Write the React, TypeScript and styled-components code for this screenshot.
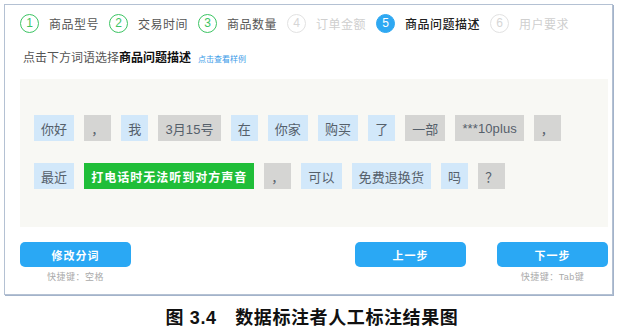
import React from 'react';
import styled, { createGlobalStyle } from 'styled-components';

const GlobalStyle = createGlobalStyle`
  body {
    margin: 0;
    background: #ffffff;
    font-family: "Liberation Sans", "Noto Sans CJK SC", sans-serif;
  }
`;

const Page = styled.div`
  width: 626px;
  height: 332px;
  padding: 4px 0 0 4px;
  box-sizing: border-box;
`;

const Frame = styled.div`
  width: 609px;
  height: 291px;
  box-sizing: border-box;
  border: 1px solid #b4c1d3;
  box-shadow: 1px 1px 0 #a3b3ca;
  padding: 7px 4px 0 15px;
  display: flex;
  flex-direction: column;
`;

const Steps = styled.div`
  display: flex;
  align-items: center;
  height: 22px;
`;

const Step = styled.div`
  display: flex;
  align-items: center;
  margin-right: 10px;
`;

type StepState = 'done' | 'active' | 'todo';

const Circle = styled.span<{ $state: StepState }>`
  width: 19px;
  height: 19px;
  box-sizing: border-box;
  border-radius: 50%;
  display: flex;
  align-items: center;
  justify-content: center;
  font-size: 12px;
  margin-right: 10px;
  border: 1.5px solid
    ${(p) => (p.$state === 'done' ? '#3cc463' : p.$state === 'active' ? '#2ea8f2' : '#e2e2e2')};
  background: ${(p) => (p.$state === 'active' ? '#2ea8f2' : 'transparent')};
  color: ${(p) => (p.$state === 'done' ? '#3cc463' : p.$state === 'active' ? '#fff' : '#d6d6d6')};
`;

const StepLabel = styled.span<{ $state: StepState }>`
  font-size: 12px;
  letter-spacing: 0.5px;
  color: ${(p) => (p.$state === 'done' ? '#555' : p.$state === 'active' ? '#222' : '#cfcfcf')};
  font-weight: ${(p) => (p.$state === 'active' ? 500 : 400)};
`;

const Hint = styled.div`
  margin-top: 14px;
  font-size: 12px;
  color: #555;
  display: flex;
  align-items: baseline;
  padding-left: 3px;
`;

const HintStrong = styled.b`
  color: #111;
  font-weight: 700;
`;

const SampleLink = styled.span`
  font-size: 8px;
  color: #3a9be8;
  margin-left: 7px;
`;

const Panel = styled.div`
  margin-top: 14px;
  background: #f8f8f4;
  height: 148px;
  box-sizing: border-box;
  padding: 36px 0 0 14px;
  display: flex;
  flex-direction: column;
  gap: 22px;
`;

const TokenRow = styled.div`
  display: flex;
  gap: 10px;
`;

type TokenKind = 'word' | 'punct' | 'key';

const Token = styled.span<{ $kind: TokenKind }>`
  height: 26px;
  min-width: 26px;
  box-sizing: border-box;
  padding: 0 7px;
  display: flex;
  align-items: center;
  justify-content: center;
  font-size: ${(p) => (p.$kind === 'key' ? '12px' : '13px')};
  letter-spacing: ${(p) => (p.$kind === 'key' ? '1px' : '0.1px')};
  font-weight: ${(p) => (p.$kind === 'key' ? 700 : 400)};
  background: ${(p) => (p.$kind === 'word' ? '#d2e8fa' : p.$kind === 'punct' ? '#d5d5d3' : '#1fbe38')};
  color: ${(p) => (p.$kind === 'key' ? '#fff' : '#55606b')};
`;

const Actions = styled.div`
  margin-top: 15px;
  display: flex;
  justify-content: space-between;
  align-items: flex-start;
`;

const NavGroup = styled.div`
  display: flex;
  gap: 31px;
`;

const ActionGroup = styled.div`
  display: flex;
  flex-direction: column;
  align-items: center;
`;

const Button = styled.button`
  width: 111px;
  height: 25px;
  border: none;
  border-radius: 5px;
  background: #2aa8f4;
  color: #fff;
  font-family: inherit;
  font-size: 11px;
  font-weight: 700;
  letter-spacing: 1px;
  padding: 0;
`;

const Shortcut = styled.span`
  margin-top: 3px;
  font-size: 9px;
  color: #aaa;
  letter-spacing: 0.5px;
`;

const Caption = styled.div`
  margin-top: 8px;
  text-align: center;
  font-size: 18px;
  font-weight: 700;
  letter-spacing: 0.6px;
  color: #111;
  padding-right: 6px;
`;

const steps: { label: string; state: StepState }[] = [
  { label: '商品型号', state: 'done' },
  { label: '交易时间', state: 'done' },
  { label: '商品数量', state: 'done' },
  { label: '订单金额', state: 'todo' },
  { label: '商品问题描述', state: 'active' },
  { label: '用户要求', state: 'todo' },
];

const rows: [string, TokenKind][][] = [
  [
    ['你好', 'word'],
    ['，', 'punct'],
    ['我', 'word'],
    ['3月15号', 'punct'],
    ['在', 'word'],
    ['你家', 'word'],
    ['购买', 'word'],
    ['了', 'word'],
    ['一部', 'punct'],
    ['***10plus', 'punct'],
    ['，', 'punct'],
  ],
  [
    ['最近', 'word'],
    ['打电话时无法听到对方声音', 'key'],
    ['，', 'punct'],
    ['可以', 'word'],
    ['免费退换货', 'word'],
    ['吗', 'word'],
    ['？', 'punct'],
  ],
];

export default function App() {
  return (
    <Page>
      <GlobalStyle />
      <Frame>
        <Steps>
          {steps.map((s, i) => (
            <Step key={s.label}>
              <Circle $state={s.state}>{i + 1}</Circle>
              <StepLabel $state={s.state}>{s.label}</StepLabel>
            </Step>
          ))}
        </Steps>
        <Hint>
          点击下方词语选择<HintStrong>商品问题描述</HintStrong>
          <SampleLink>点击查看样例</SampleLink>
        </Hint>
        <Panel>
          {rows.map((row, r) => (
            <TokenRow key={r}>
              {row.map(([text, kind], i) => (
                <Token key={i} $kind={kind}>
                  {text}
                </Token>
              ))}
            </TokenRow>
          ))}
        </Panel>
        <Actions>
          <ActionGroup>
            <Button>修改分词</Button>
            <Shortcut>快捷键：空格</Shortcut>
          </ActionGroup>
          <NavGroup>
            <ActionGroup>
              <Button>上一步</Button>
            </ActionGroup>
            <ActionGroup>
              <Button>下一步</Button>
              <Shortcut>快捷键：Tab键</Shortcut>
            </ActionGroup>
          </NavGroup>
        </Actions>
      </Frame>
      <Caption>图 3.4　数据标注者人工标注结果图</Caption>
    </Page>
  );
}
